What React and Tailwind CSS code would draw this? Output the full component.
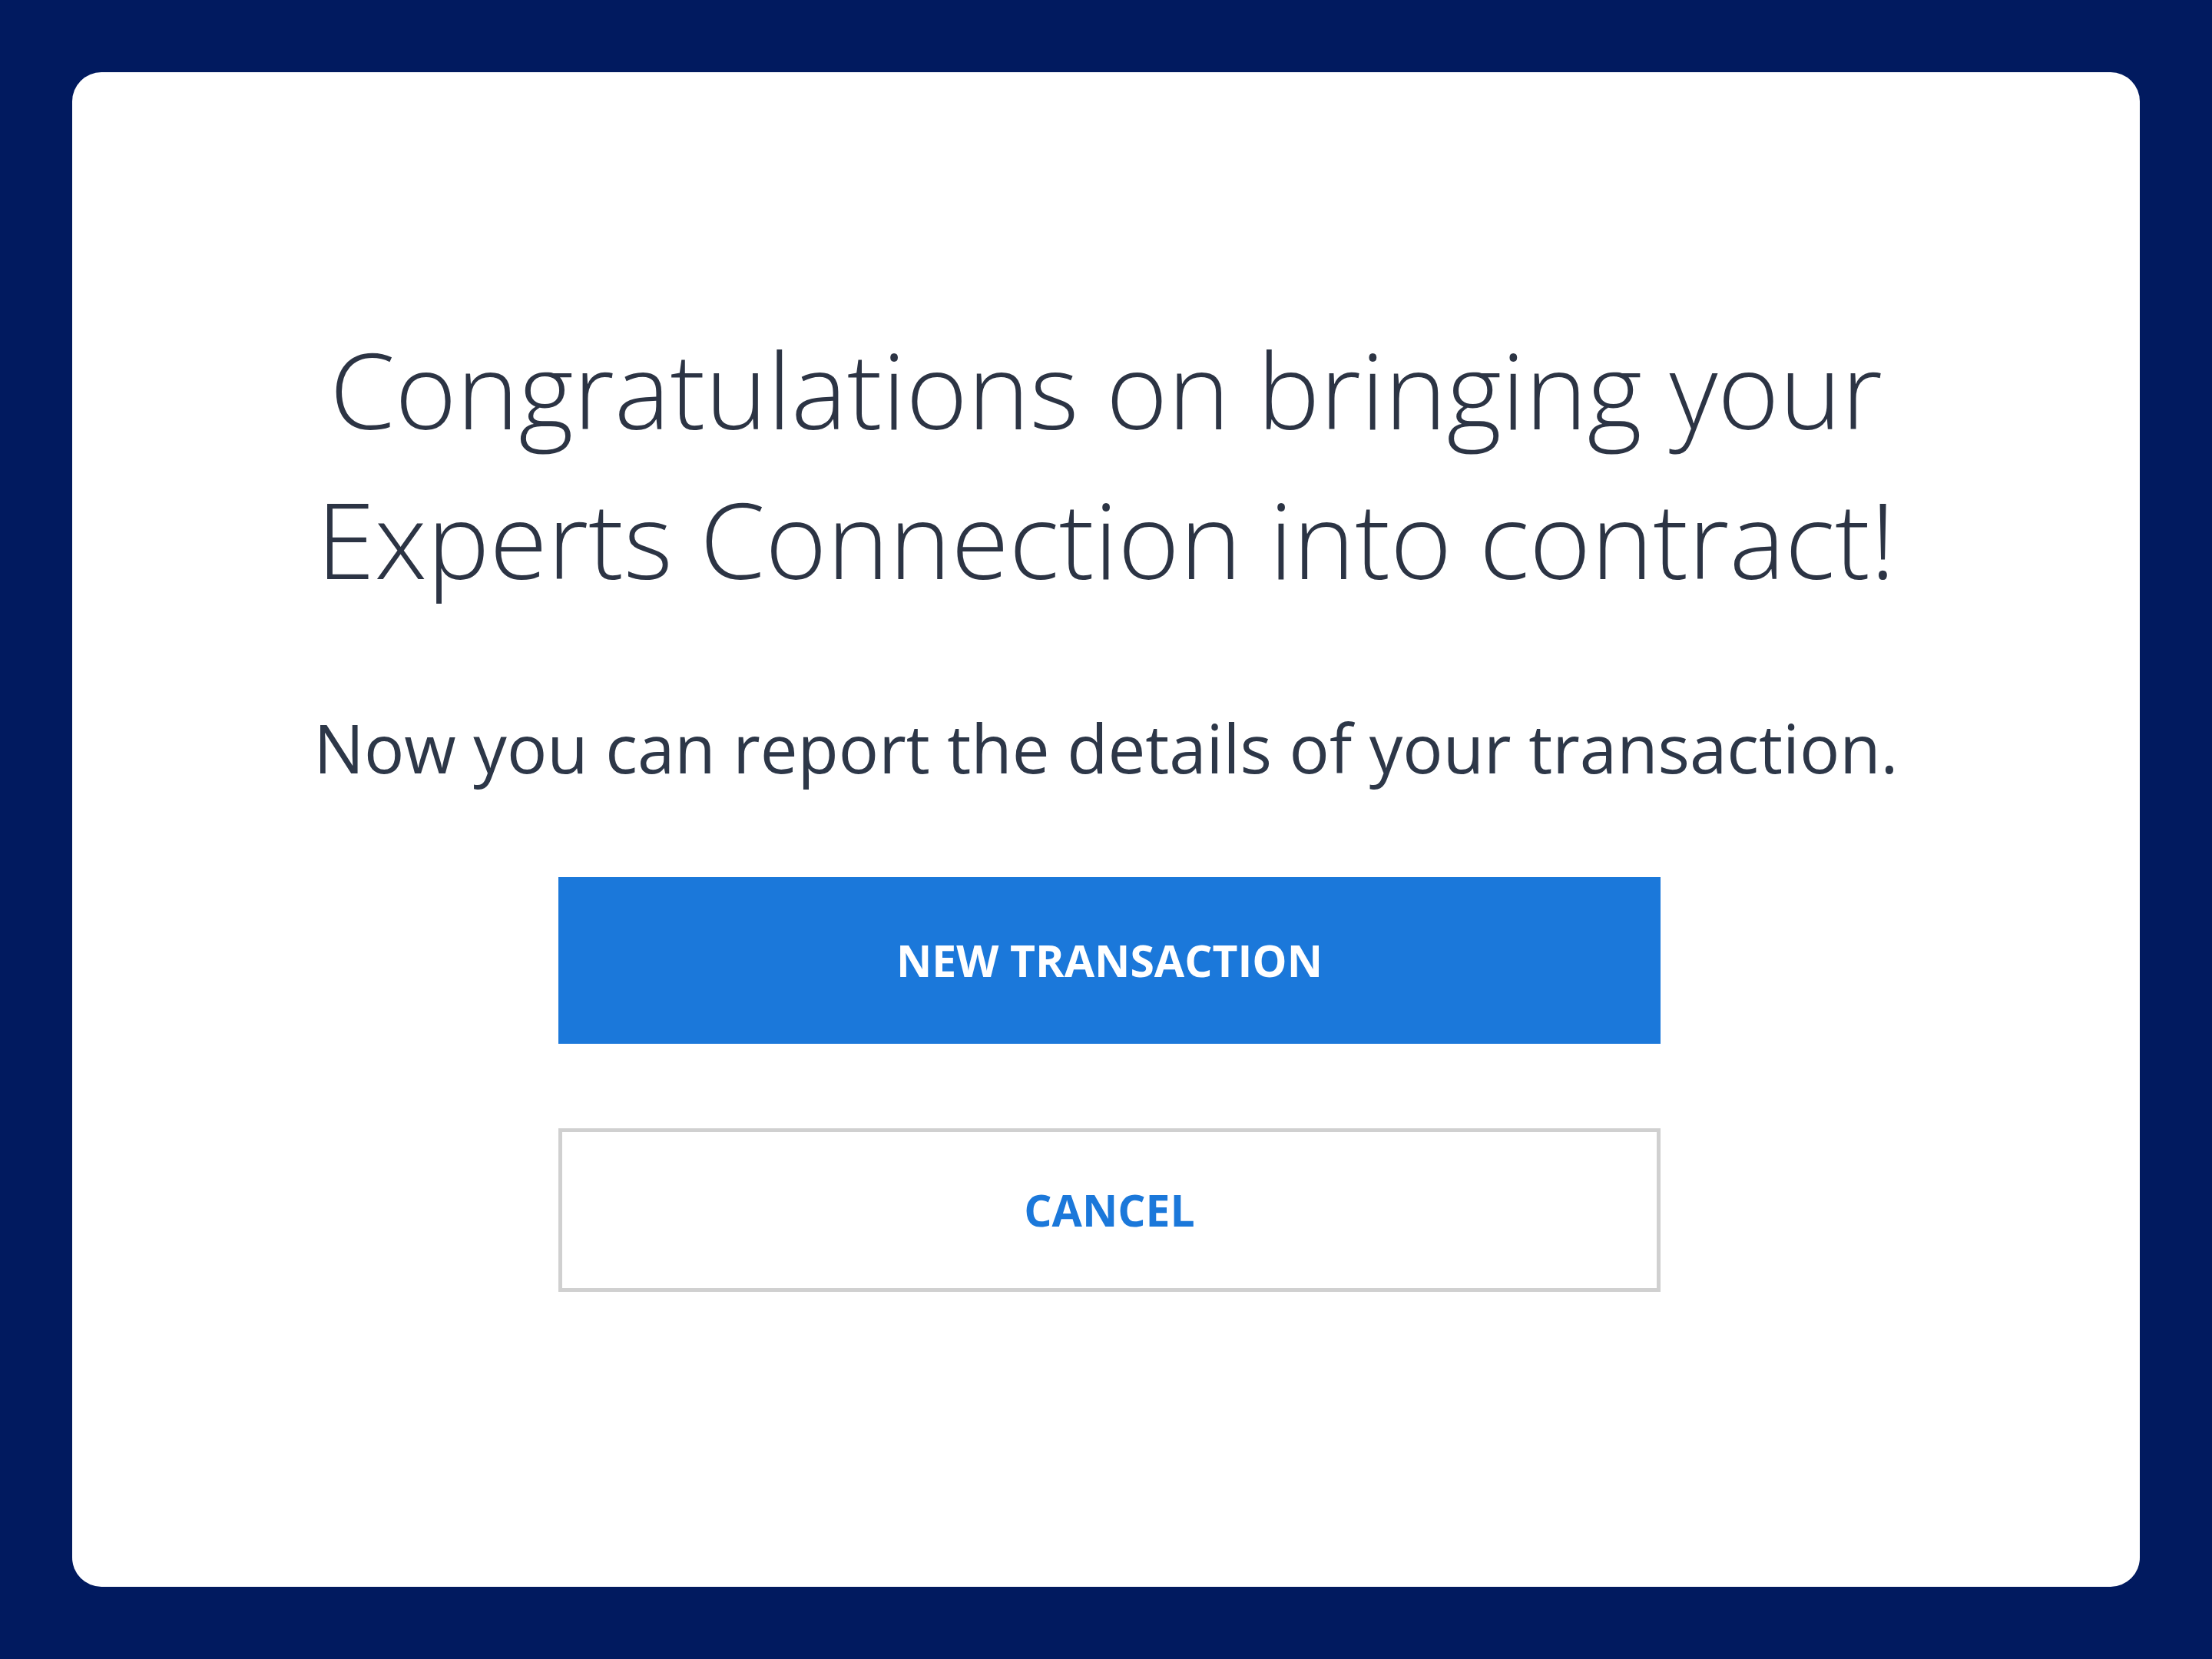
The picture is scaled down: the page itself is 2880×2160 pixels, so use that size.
export default function App() {
  return (
    <div className="min-h-screen bg-[#011a5f] p-[94px] font-['Open_Sans',sans-serif]">
      <div className="flex h-[1972px] flex-col items-center rounded-[38px] bg-white pt-[315px]">
        <h1 className="text-center text-[137px] font-light leading-[195px] text-[#2c3444]">
          Congratulations on bringing your
          <br />
          Experts Connection into contract!
        </h1>
        <p className="mt-[118px] text-[87px] leading-[112px] text-[#2d3748]">
          Now you can report the details of your transaction.
        </p>
        <button className="ml-[9px] mt-[113px] h-[217px] w-[1435px] bg-[#1b78da] text-[57px] font-bold text-white">
          NEW TRANSACTION
        </button>
        <button className="ml-[9px] mt-[110px] h-[213px] w-[1435px] border-[5px] border-[#d0d0d0] bg-white text-[57px] font-bold text-[#1b78da]">
          CANCEL
        </button>
      </div>
    </div>
  );
}
